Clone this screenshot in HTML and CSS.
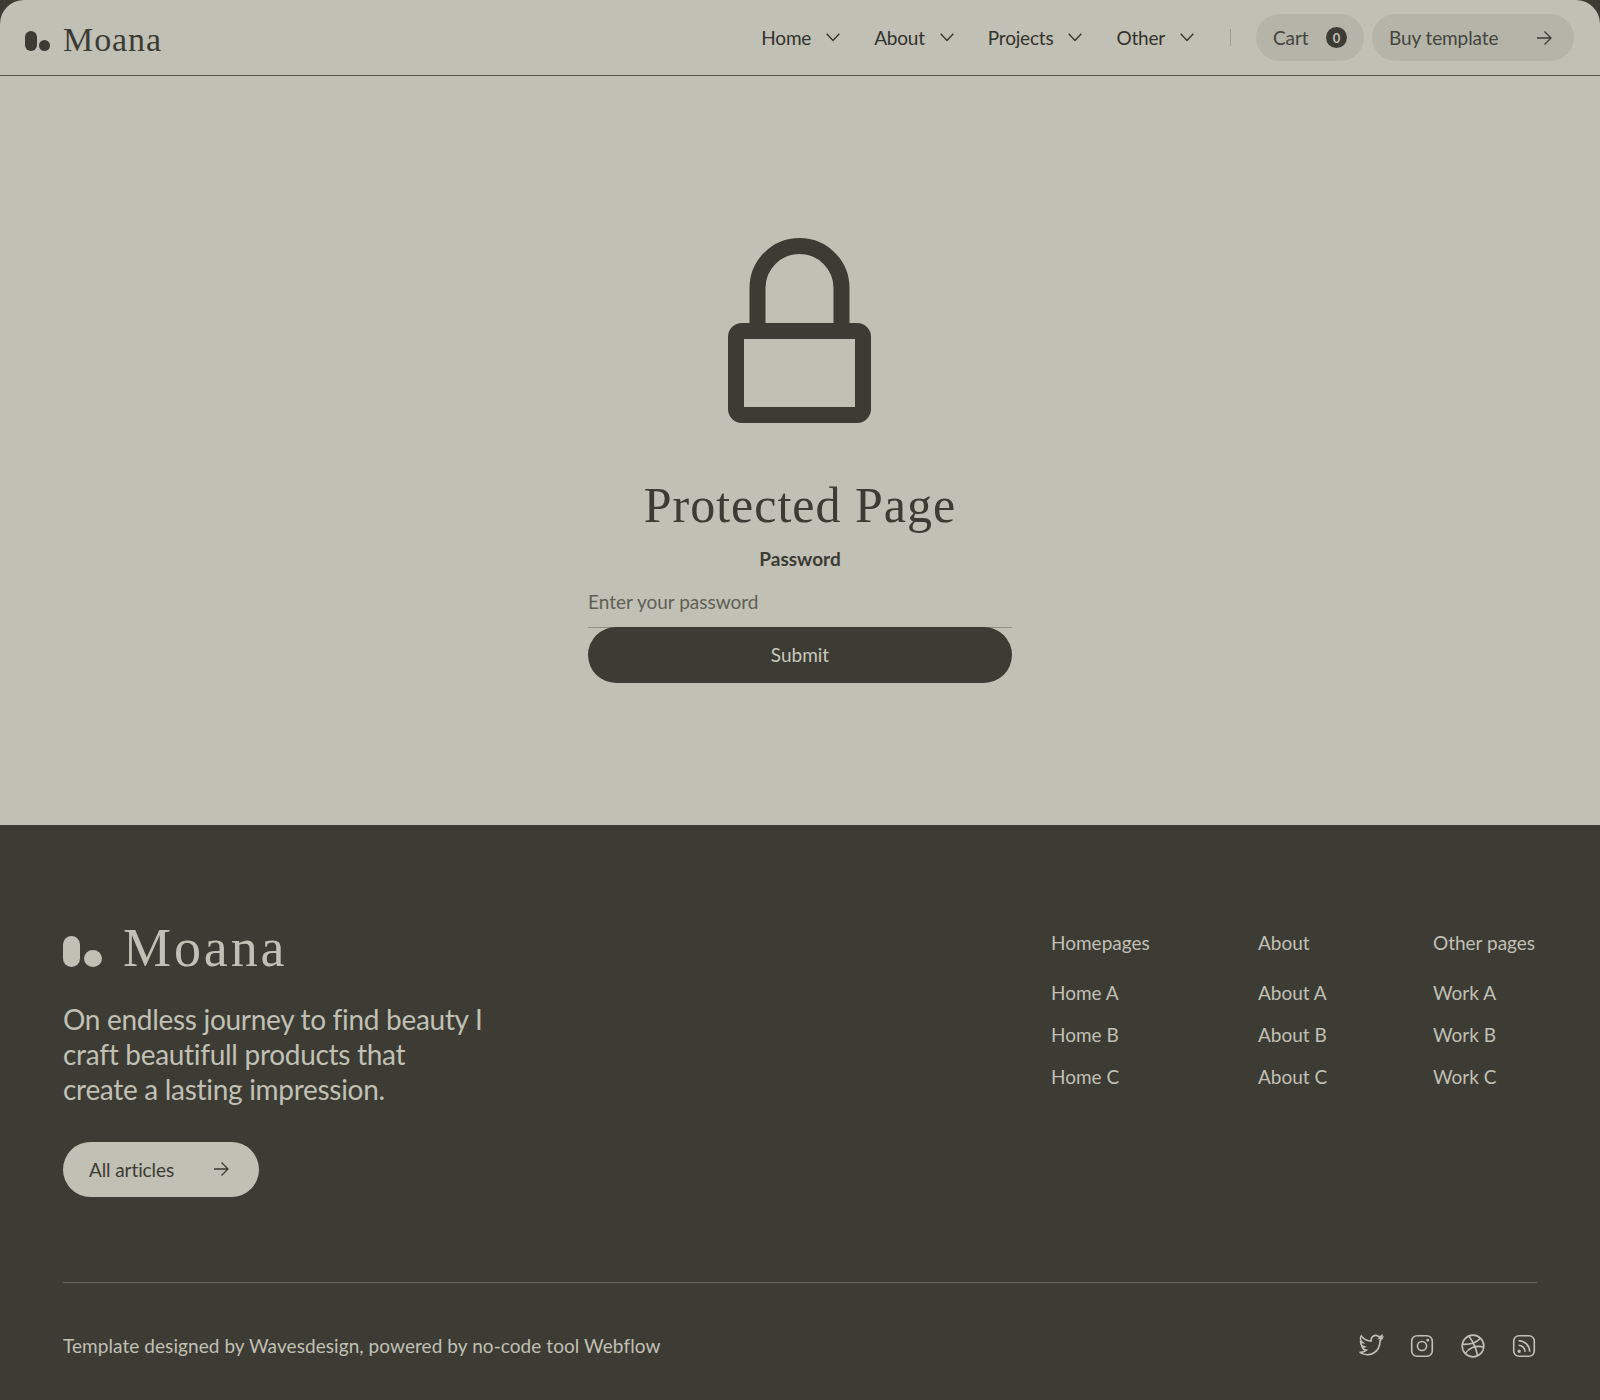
FILE: index.html
```html
<!DOCTYPE html>
<html lang="en">

<head>
    <meta charset="UTF-8">
    <meta name="viewport" content="width=device-width, initial-scale=1.0">
    <title>Protected Page - Moana</title>
    <link rel="stylesheet" href="styles.css">
</head>

<body>
    <div class="page">
        <header class="navbar">
            <a class="brand" href="#">
                <span class="brand-mark"><span class="mark-bar"></span><span class="mark-dot"></span></span>
                <span class="brand-name">Moana</span>
            </a>

            <nav class="nav">
                <a class="nav-link" href="#">Home
                    <svg class="chevron" viewBox="0 0 14 9"><path d="M.7.7 7 7.500 13.300.7" /></svg>
                </a>
                <a class="nav-link" href="#">About
                    <svg class="chevron" viewBox="0 0 14 9"><path d="M.7.7 7 7.500 13.300.7" /></svg>
                </a>
                <a class="nav-link" href="#">Projects
                    <svg class="chevron" viewBox="0 0 14 9"><path d="M.7.7 7 7.500 13.300.7" /></svg>
                </a>
                <a class="nav-link" href="#">Other
                    <svg class="chevron" viewBox="0 0 14 9"><path d="M.7.7 7 7.500 13.300.7" /></svg>
                </a>
                <span class="nav-divider"></span>
                <a class="pill cart-pill" href="#">Cart <span class="cart-count">0</span></a>
                <a class="pill buy-pill" href="#">Buy template
                    <svg class="arrow" viewBox="0 0 16 16"><path d="M1 8h14M8.500 1.500 15 8l-6.500 6.500" /></svg>
                </a>
            </nav>
        </header>

        <main class="protected">
            <svg class="lock" viewBox="0 0 143 185">
                <path class="lock-shackle" d="M29.500 93V50a42 42 0 0 1 84 0v43" />
                <rect class="lock-body" x="8" y="93" width="127" height="84" rx="6" />
            </svg>
            <h1 class="protected-title">Protected Page</h1>
            <form class="password-form">
                <label class="password-label" for="password">Password</label>
                <input class="password-input" id="password" type="password" placeholder="Enter your password">
                <button class="submit-button" type="button">Submit</button>
            </form>
        </main>

        <footer class="footer">
            <div class="footer-top">
                <div class="footer-intro">
                    <a class="brand brand-large" href="#">
                        <span class="brand-mark"><span class="mark-bar"></span><span class="mark-dot"></span></span>
                        <span class="brand-name">Moana</span>
                    </a>
                    <p class="footer-text">On endless journey to find beauty I<br>craft beautifull products that<br>create a lasting impression.</p>
                    <a class="articles-button" href="#">All articles
                        <svg class="arrow" viewBox="0 0 16 16"><path d="M1 8h14M8.500 1.500 15 8l-6.500 6.500" /></svg>
                    </a>
                </div>

                <div class="footer-links">
                    <div class="footer-col">
                        <h2 class="footer-heading">Homepages</h2>
                        <a href="#">Home A</a>
                        <a href="#">Home B</a>
                        <a href="#">Home C</a>
                    </div>
                    <div class="footer-col">
                        <h2 class="footer-heading">About</h2>
                        <a href="#">About A</a>
                        <a href="#">About B</a>
                        <a href="#">About C</a>
                    </div>
                    <div class="footer-col">
                        <h2 class="footer-heading">Other pages</h2>
                        <a href="#">Work A</a>
                        <a href="#">Work B</a>
                        <a href="#">Work C</a>
                    </div>
                </div>
            </div>

            <div class="footer-bottom">
                <p class="credits">Template designed by Wavesdesign, powered by no-code tool Webflow</p>
                <div class="socials">
                    <a href="#" aria-label="Twitter">
                        <svg viewBox="0 0 24 24"><path d="M22.500 4.200c-.9.400-1.600.6-2.400.7.800-.6 1.500-1.300 1.800-2.400-.8.500-1.700.9-2.600 1.100A4.200 4.200 0 0 0 12.200 7.400C8.600 7.400 5.200 5.500 3 2.700c-1.300 2.300-.5 5 1.400 6.300-.7 0-1.400-.2-2-.5.100 2.200 1.400 3.700 3.400 4.300-.6.200-1.300.2-1.900.1.600 1.700 2 2.800 3.900 3-1.700 1.500-4 2.200-6.300 2 8.500 5 18.800.6 18.900-11 .8-.6 1.500-1.400 2.100-2.700z" /></svg>
                    </a>
                    <a href="#" aria-label="Instagram">
                        <svg viewBox="0 0 24 24"><rect x="2.500" y="2.500" width="19" height="19" rx="5" /><circle cx="12" cy="12" r="4.200" /><circle class="social-dot" cx="17.300" cy="6.700" r=".6" /></svg>
                    </a>
                    <a href="#" aria-label="Dribbble">
                        <svg viewBox="0 0 24 24"><circle cx="12" cy="12" r="10" /><path d="M8.200 2.900c3.500 4.300 6.500 10.500 8 17.900M2.200 10.500c6.500.3 12.500-1.200 16.700-5.700M4.800 19c3-5 9.300-8 17.100-6.100" /></svg>
                    </a>
                    <a href="#" aria-label="RSS">
                        <svg viewBox="0 0 24 24"><rect x="2.500" y="2.500" width="19" height="19" rx="5" /><path d="M7 11.300a6 6 0 0 1 6 6M7 7a10.500 10.500 0 0 1 10.300 10.300" /><circle class="social-dot" cx="7.500" cy="16.800" r=".8" /></svg>
                    </a>
                </div>
            </div>
        </footer>
    </div>
</body>

</html>
```

FILE: styles.css
```css
/* Reset and base styles */
* {
    box-sizing: border-box;
    margin: 0;
    padding: 0;
}

body {
    font-family: Lato, "Noto Sans", Arial, sans-serif;
    background-color: #3c3b34;
    color: #3c3b34;
}

a {
    color: inherit;
    text-decoration: none;
}

.page {
    height: 1400px;
    display: flex;
    flex-direction: column;
    overflow: hidden;
}

/* Navbar */
.navbar {
    height: 76px;
    flex-shrink: 0;
    display: flex;
    align-items: center;
    justify-content: space-between;
    padding: 0 26px 0 25px;
    background-color: #c1c0b4;
    border-bottom: 1px solid #55554a;
    border-top-left-radius: 24px;
    border-top-right-radius: 24px;
}

.brand {
    display: flex;
    align-items: center;
    gap: 13px;
    padding-top: 6px;
}

.brand-mark {
    display: flex;
    align-items: flex-end;
    gap: 2px;
}

.mark-bar {
    width: 12px;
    height: 20px;
    border-radius: 6px;
    background-color: #3c3b34;
}

.mark-dot {
    width: 11px;
    height: 11px;
    border-radius: 50%;
    background-color: #3c3b34;
}

.brand-name {
    margin-bottom: 2px;
    font-family: "Liberation Serif", serif;
    font-size: 34px;
    line-height: 40px;
    letter-spacing: 0.9px;
    color: #3c3b34;
}

.nav {
    display: flex;
    align-items: center;
}

.nav-link {
    display: flex;
    align-items: center;
    gap: 15px;
    margin-right: 34px;
    font-size: 19px;
    letter-spacing: -0.2px;
    color: #33332d;
}

.chevron {
    width: 14px;
    height: 9px;
    fill: none;
    stroke: #33332d;
    stroke-width: 1.300;
}

.nav-divider {
    width: 1px;
    height: 17px;
    margin: 0 25px 0 2px;
    background-color: #9d9d91;
}

.pill {
    height: 47px;
    display: flex;
    align-items: center;
    justify-content: space-between;
    border-radius: 24px;
    background-color: #b4b4a8;
    font-size: 19px;
    letter-spacing: -0.1px;
    color: #45453e;
}

.cart-pill {
    width: 108px;
    padding: 0 17px;
    margin-right: 8px;
}

.cart-count {
    width: 21px;
    height: 21px;
    display: flex;
    align-items: center;
    justify-content: center;
    border-radius: 50%;
    background-color: #3c3b34;
    color: #c1c0b4;
    font-size: 13px;
    font-weight: 700;
}

.buy-pill {
    width: 202px;
    padding: 0 22px 0 17px;
}

.arrow {
    width: 16px;
    height: 16px;
    fill: none;
    stroke: #3c3b34;
    stroke-width: 1.300;
}

/* Protected page */
.protected {
    height: 749px;
    flex-shrink: 0;
    display: flex;
    flex-direction: column;
    align-items: center;
    padding-top: 162px;
    background-color: #c1c0b4;
}

.lock {
    width: 143px;
    height: 185px;
    margin-left: -1px;
    fill: none;
    stroke: #3c3b34;
    stroke-width: 16;
    display: block;
}

.lock-body {
    stroke-linejoin: round;
}

.protected-title {
    margin-top: 52px;
    font-family: "Liberation Serif", serif;
    font-size: 50px;
    line-height: 60px;
    font-weight: 400;
    letter-spacing: 1px;
    color: #3c3b34;
}

.password-form {
    width: 424px;
    display: flex;
    flex-direction: column;
    margin-top: 9px;
}

.password-label {
    text-align: center;
    font-size: 19px;
    line-height: 30px;
    font-weight: 700;
    color: #3c3b34;
}

.password-input {
    height: 54px;
    padding-top: 2px;
    border: none;
    border-bottom: 1px solid #8f8f84;
    outline: none;
    background: none;
    font-family: inherit;
    font-size: 19px;
    color: #3c3b34;
}

.password-input::placeholder {
    color: #5f5f56;
    opacity: 1;
}

.submit-button {
    height: 56px;
    margin-top: -1px;
    padding-bottom: 2px;
    border: none;
    border-radius: 28px;
    background-color: #3c3b34;
    color: #c9c9bd;
    font-family: inherit;
    font-size: 19px;
    cursor: pointer;
}

/* Footer */
.footer {
    flex: 1;
    padding: 106px 63px 0;
    background-color: #3c3b34;
    color: #c1c0b4;
}

.footer-top {
    height: 352px;
    display: flex;
    justify-content: space-between;
    border-bottom: 1px solid #63635b;
}

.brand-large {
    gap: 21px;
    margin-top: -8px;
    padding-top: 0;
}

.brand-large .brand-mark {
    gap: 4px;
    padding-top: 6px;
}

.brand-large .mark-bar {
    width: 17px;
    height: 31px;
    border-radius: 9px;
    background-color: #c1c0b4;
}

.brand-large .mark-dot {
    width: 18px;
    height: 17px;
    background-color: #c1c0b4;
}

.brand-large .brand-name {
    margin-bottom: 0;
    font-size: 54px;
    line-height: 50px;
    letter-spacing: 2.900px;
    color: #c1c0b4;
}

.footer-text {
    margin-top: 29px;
    font-size: 28px;
    line-height: 35.200px;
    letter-spacing: -0.3px;
}

.articles-button {
    width: 196px;
    height: 55px;
    margin-top: 34px;
    padding: 0 30px 0 26px;
    display: flex;
    align-items: center;
    justify-content: space-between;
    border-radius: 28px;
    background-color: #c1c0b4;
    color: #3c3b34;
    font-size: 19px;
    letter-spacing: -0.1px;
}

.footer-links {
    display: grid;
    grid-template-columns: 207px 175px 104px;
    align-content: start;
}

.footer-col {
    display: flex;
    flex-direction: column;
    font-size: 19px;
}

.footer-col a {
    line-height: 24px;
    margin-bottom: 18px;
}

.footer-heading {
    margin-bottom: 26px;
    font-size: 19px;
    line-height: 24px;
    font-weight: 400;
    white-space: nowrap;
}

.footer-bottom {
    display: flex;
    align-items: center;
    justify-content: space-between;
    height: 125px;
}

.credits {
    font-size: 19px;
    letter-spacing: 0.07px;
}

.socials {
    display: flex;
    gap: 25px;
}

.socials svg {
    display: block;
    width: 26px;
    height: 26px;
    fill: none;
    stroke: #c1c0b4;
    stroke-width: 1.500;
}

.socials .social-dot {
    fill: #c1c0b4;
}
```
